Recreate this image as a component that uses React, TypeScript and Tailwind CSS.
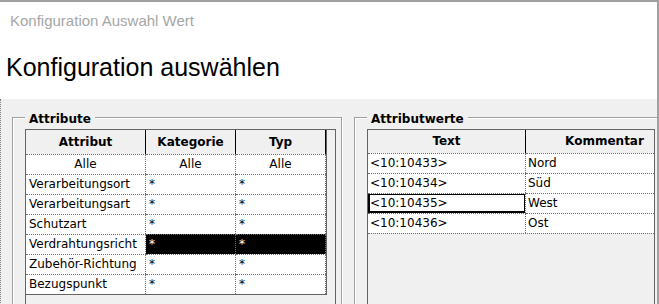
type Row = { a: string; k: string; t: string; center?: boolean; selected?: boolean }

const attrRows: Row[] = [
  { a: 'Alle', k: 'Alle', t: 'Alle', center: true },
  { a: 'Verarbeitungsort', k: '*', t: '*' },
  { a: 'Verarbeitungsart', k: '*', t: '*' },
  { a: 'Schutzart', k: '*', t: '*' },
  { a: 'Verdrahtungsricht', k: '*', t: '*', selected: true },
  { a: 'Zubehör-Richtung', k: '*', t: '*' },
  { a: 'Bezugspunkt', k: '*', t: '*' },
]

const valueRows = [
  { text: '<10:10433>', note: 'Nord' },
  { text: '<10:10434>', note: 'Süd' },
  { text: '<10:10435>', note: 'West', focus: true },
  { text: '<10:10436>', note: 'Ost' },
]

const cell = 'h-[20px] leading-[19px] border-t border-r border-dotted border-[#6f6f6f] whitespace-nowrap overflow-hidden'

function GroupBox({ title, children }: { title: string; children: React.ReactNode }) {
  return (
    <div className="relative flex-none w-[330px] h-[240px] border border-[#a0a0a0] shadow-[inset_1px_1px_0_#fff,1px_1px_0_#fff] pt-[11px] pl-[12px]">
      <span className="absolute top-[-6px] left-[12px] px-[4px] bg-[#f0f0f0] font-bold leading-[14px] text-black">
        {title}
      </span>
      {children}
    </div>
  )
}

function AttributeList() {
  return (
    <div className="w-[311px] h-[220px] border-l border-t border-r border-[#646464] bg-[#f0f0f0]">
      <div className="w-[301px] border-r border-b border-[#646464]">
        <div className="flex h-[24px] leading-[24px] font-bold text-center">
          <div className="w-[120px] border-r border-black">Attribut</div>
          <div className="w-[90px] border-r border-black">Kategorie</div>
          <div className="w-[90px] border-r border-black">Typ</div>
        </div>
        {attrRows.map((r) => (
          <div key={r.a} className="flex">
            <div className={`w-[120px] bg-white text-black ${cell} ${r.center ? 'text-center' : 'pl-[3px]'}`}>{r.a}</div>
            <div className={`w-[90px] ${cell} ${r.selected ? 'bg-black text-white' : 'bg-white text-black'} ${r.center ? 'text-center' : 'pl-[3px]'}`}>{r.k}</div>
            <div className={`w-[90px] ${cell} ${r.selected ? 'bg-black text-white' : 'bg-white text-black'} ${r.center ? 'text-center' : 'pl-[3px]'}`}>{r.t}</div>
          </div>
        ))}
      </div>
    </div>
  )
}

function ValueList() {
  return (
    <div className="w-[288px] h-[220px] overflow-hidden border-l border-t border-r border-[#646464] bg-[#f0f0f0]">
      <div className="w-[316px]">
        <div className="flex h-[23px] leading-[23px] font-bold text-center">
          <div className="w-[158px] flex-none border-r border-black">Text</div>
          <div className="w-[158px] flex-none border-r border-black">Kommentar</div>
        </div>
        <div className="border-b border-dotted border-[#6f6f6f]">
          {valueRows.map((r) => (
            <div key={r.text} className="flex">
              <div className={`relative w-[158px] flex-none bg-white pl-[2px] ${cell}`}>
                {r.text}
                {r.focus && <span className="absolute -top-px left-0 -right-px bottom-0 border-2 border-black" />}
              </div>
              <div className={`w-[158px] flex-none bg-white pl-[2px] ${cell}`}>{r.note}</div>
            </div>
          ))}
        </div>
      </div>
    </div>
  )
}

export default function App() {
  return (
    <div className="w-[659px] h-[304px] overflow-hidden flex flex-col border-t-2 border-r-2 border-[#a0a0a0] bg-[#f0f0f0]">
      <div className="h-[97px] flex-none bg-white font-['Liberation_Sans',Arial,sans-serif]">
        <div className="pt-[10px] pl-[10px] text-[15px] leading-[17px] text-[#a6a6a6]">Konfiguration Auswahl Wert</div>
        <div className="mt-[24px] pl-[6px] text-[25px] leading-[28px] text-black">Konfiguration auswählen</div>
      </div>
      <div className="flex-1 flex gap-[12px] pt-[18px] pl-[11px] border-l border-dotted border-[#808080] font-['DejaVu_Sans',sans-serif] text-[12px] text-black">
        <GroupBox title="Attribute">
          <AttributeList />
        </GroupBox>
        <GroupBox title="Attributwerte">
          <ValueList />
        </GroupBox>
      </div>
    </div>
  )
}
